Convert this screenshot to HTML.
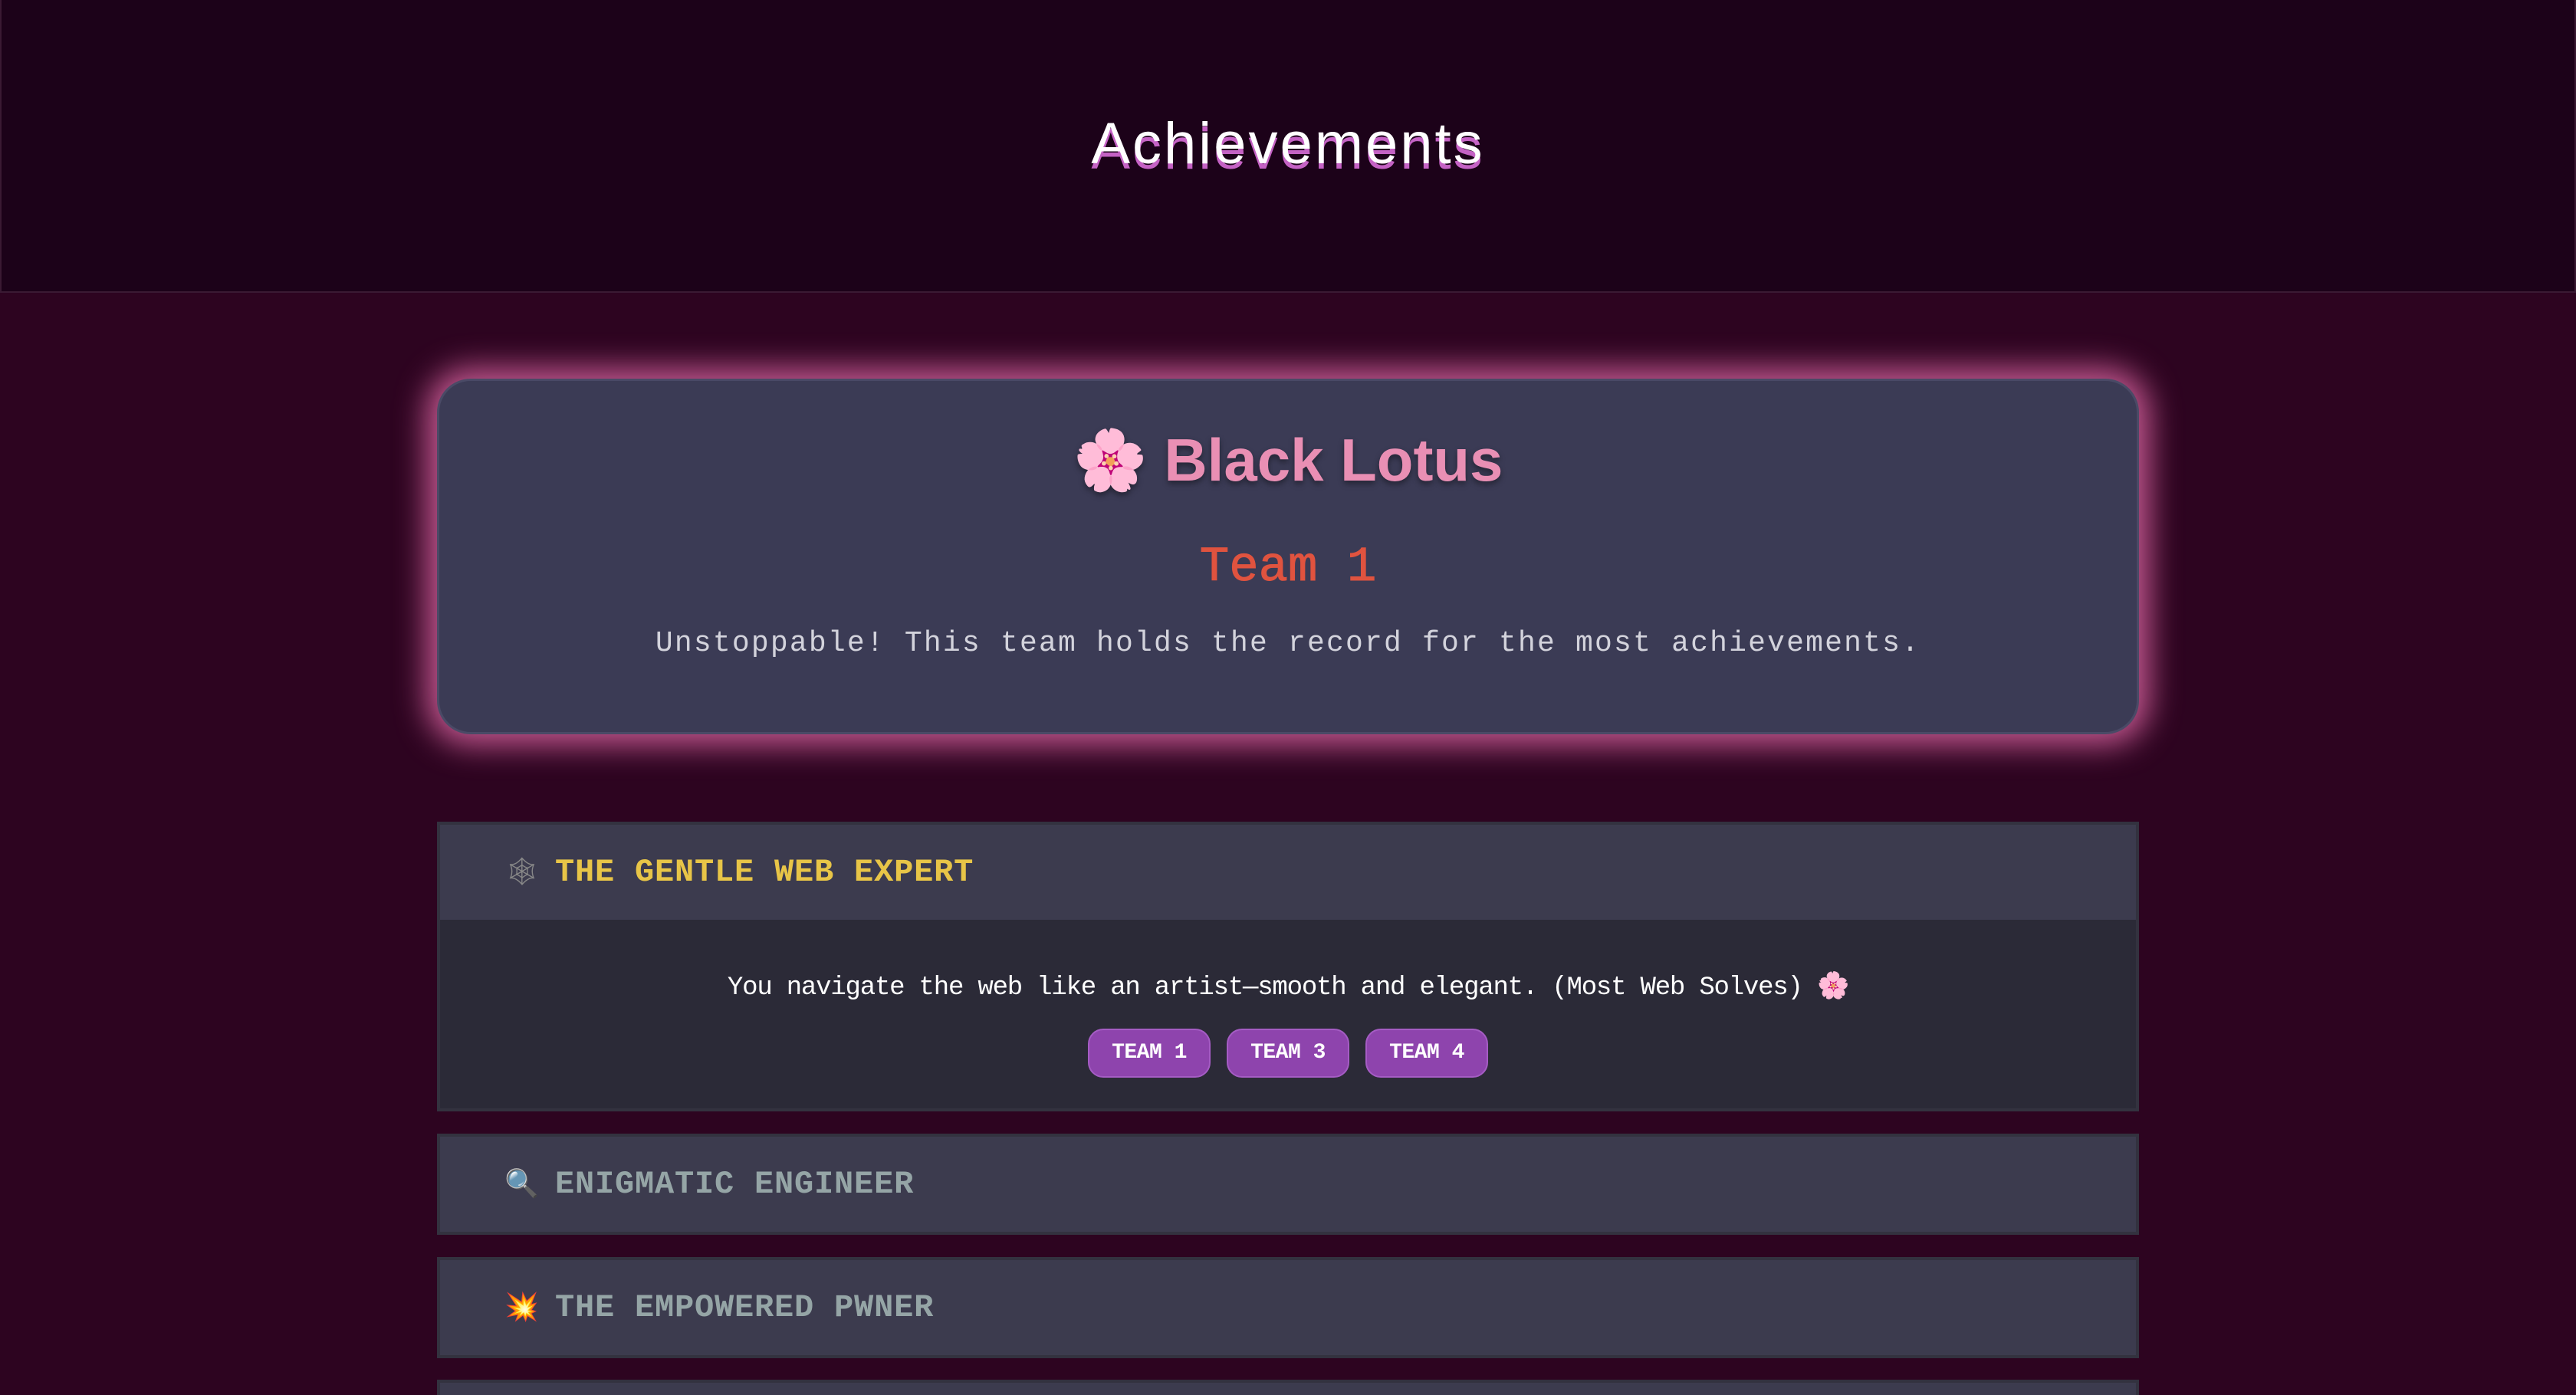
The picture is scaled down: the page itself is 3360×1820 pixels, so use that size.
<!DOCTYPE html>
<html><head><meta charset="utf-8"><style>
*{margin:0;padding:0;box-sizing:border-box}
html{width:3360px;height:1820px;overflow:hidden}
body{width:3360px;height:1820px;overflow:hidden;background:#2d0420;font-family:"Liberation Sans","DejaVu Sans",sans-serif;position:relative}
header{height:382px;background:#1c0219;border:2px solid #3a1a33;border-top:none;text-align:center}
header h1{font-weight:normal;color:#fff;font-size:76px;letter-spacing:3px;padding-top:150px;line-height:1;text-shadow:0 7px 0 #c462c4}
.card{position:absolute;left:570px;top:494px;width:2220px;height:464px;background:#3b3b55;border-radius:44px;border:3px solid #4a4a66;box-shadow:0 0 40px 14px #c2578f;text-align:center}
.card h2{font-size:78px;color:#e98fb4;margin-top:64px;line-height:1;text-shadow:0 4px 8px rgba(0,0,0,.4)}
.card .team{font-family:"Liberation Mono","DejaVu Sans Mono",monospace;font-size:64px;color:#e0533f;margin-top:70px;line-height:1;-webkit-text-stroke:1px #e0533f}
.card p{font-family:"Liberation Mono","DejaVu Sans Mono",monospace;font-size:38px;color:#d3d3dc;margin-top:45px;letter-spacing:2.2px}
.ach{position:absolute;left:570px;width:2220px;background:#3c3b4e;border:4px solid #33323f}
.ach .hd{height:124px;display:flex;align-items:center;padding-left:84px;font-family:"Liberation Mono","DejaVu Sans Mono",monospace;font-weight:bold;font-size:42px;letter-spacing:0.8px;color:#95a5a6}
.ach .hd .ic{width:38px;margin-right:28px;font-size:36px;font-weight:normal}
.ach .bd{background:#2b2a37;height:246px;text-align:center;font-family:"Liberation Mono","DejaVu Sans Mono",monospace;color:#fff}
.ach .bd p{font-size:34px;padding-top:66px;letter-spacing:-1.2px}
.badges{margin-top:34px;display:flex;justify-content:center;gap:21px}
.badges span{display:inline-block;width:160px;height:64px;line-height:60px;background:#8e44ad;border:2px solid #a55cc4;border-radius:20px;font-weight:bold;font-size:28px;color:#fff;letter-spacing:-0.5px}
</style></head><body>
<header><h1>Achievements</h1></header>
<div class="card"><h2>🌸 Black Lotus</h2><div class="team">Team 1</div><p>Unstoppable! This team holds the record for the most achievements.</p></div>
<div class="ach" style="top:1072px"><div class="hd" style="color:#e8c547"><span class="ic" style="color:#888">🕸</span>THE GENTLE WEB EXPERT</div><div class="bd"><p>You navigate the web like an artist—smooth and elegant. (Most Web Solves) 🌸</p><div class="badges"><span>TEAM 1</span><span>TEAM 3</span><span>TEAM 4</span></div></div></div>
<div class="ach" style="top:1479px"><div class="hd"><span class="ic">🔍</span>ENIGMATIC ENGINEER</div></div>
<div class="ach" style="top:1640px"><div class="hd"><span class="ic" style="color:#e74c3c">💥</span>THE EMPOWERED PWNER</div></div>
<div class="ach" style="top:1800px;height:20px;border-bottom:none"></div>
</body></html>
